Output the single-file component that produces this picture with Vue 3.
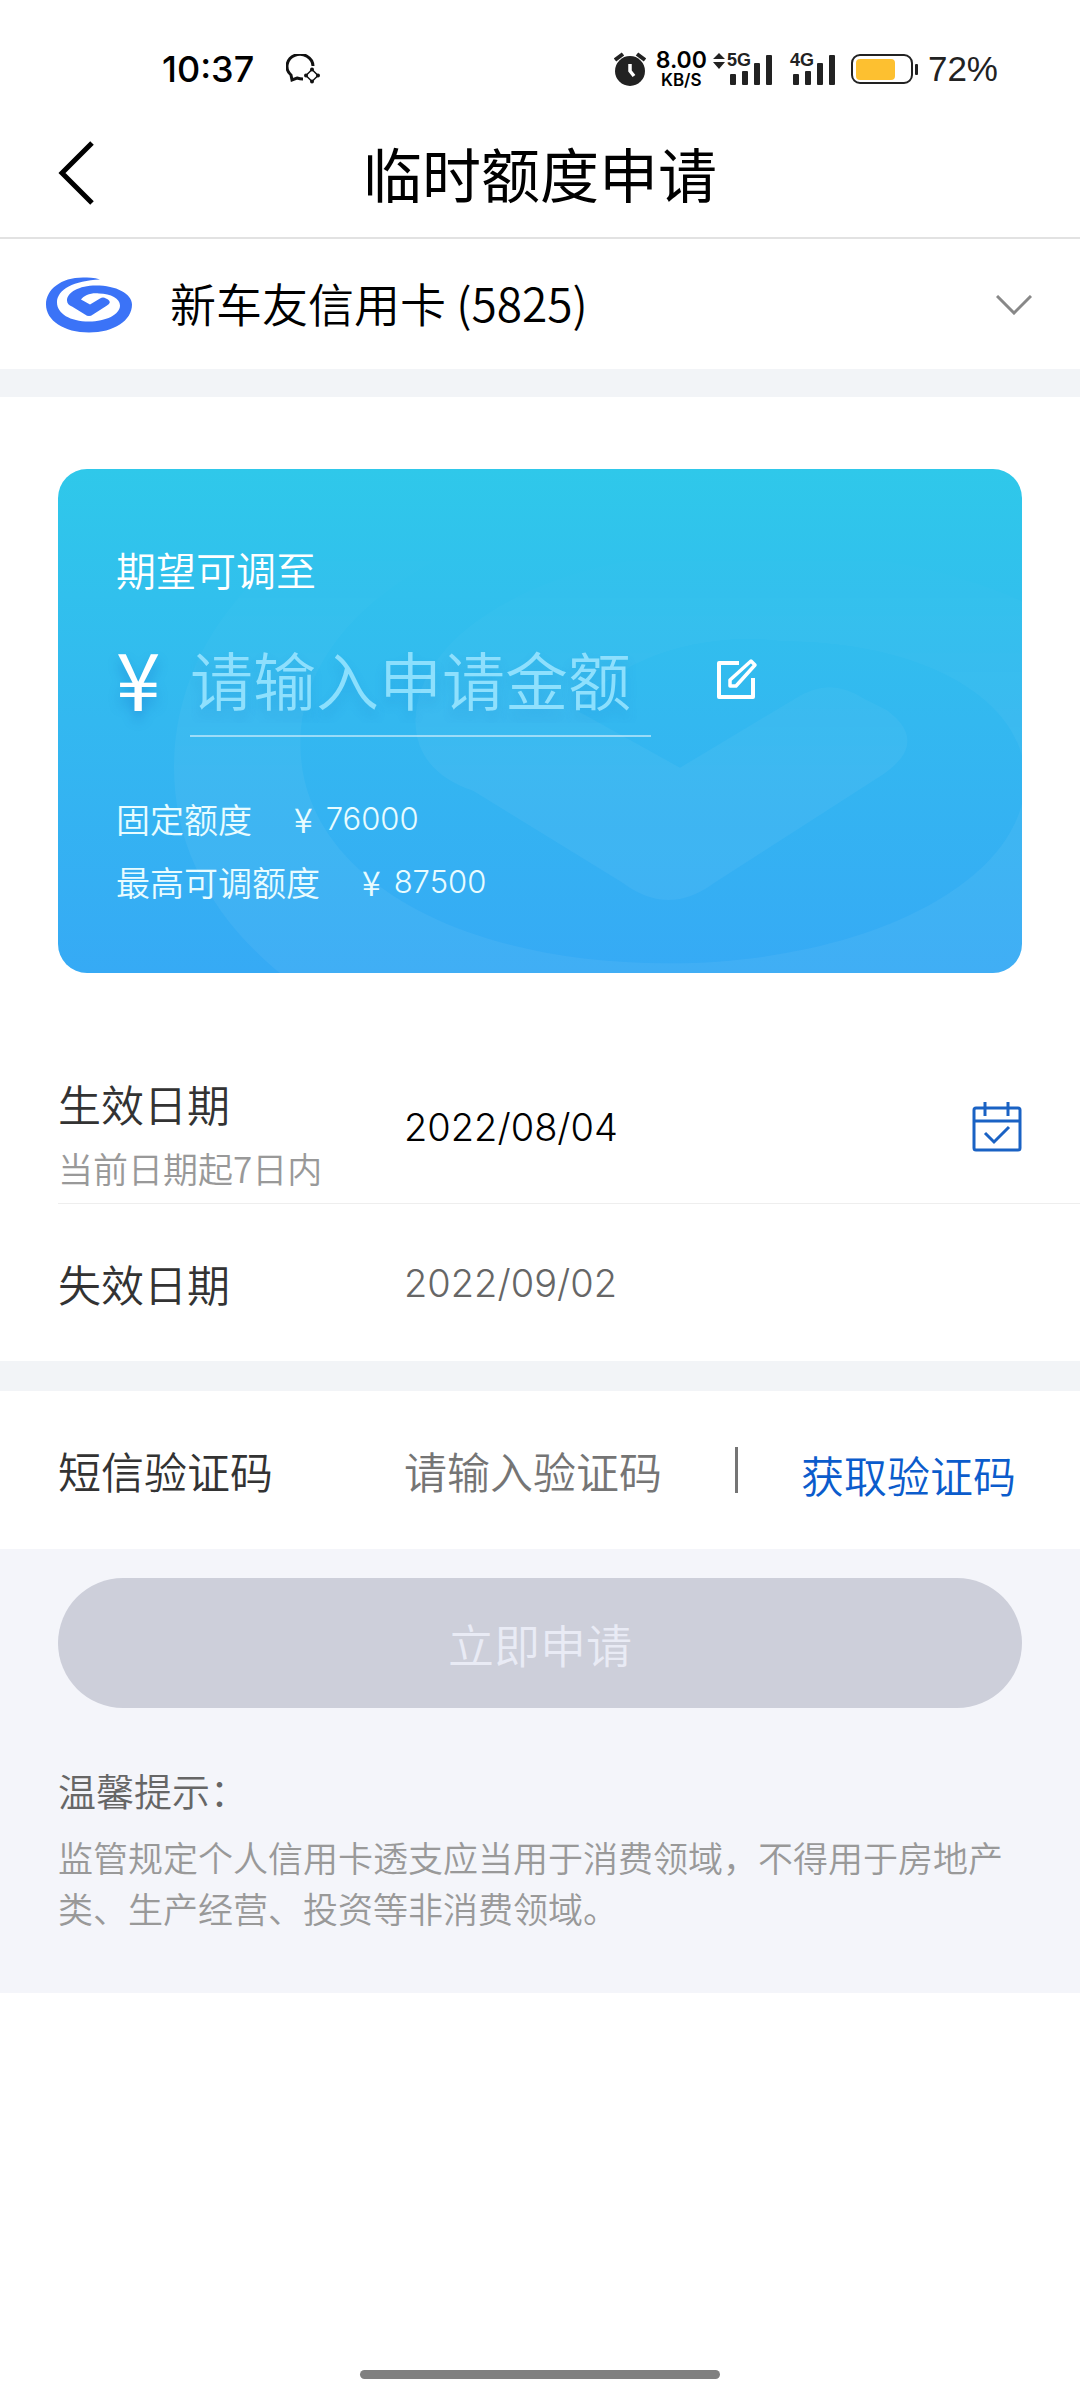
<script setup>
import { ref } from 'vue'

const card = ref('5825')
const amount = ref('')
const code = ref('')
const startDate = ref('2022/08/04')
const endDate = ref('2022/09/02')

const limits = [
  { label: '固定额度', value: '76000' },
  { label: '最高可调额度', value: '87500' },
]

const swirl =
  'M54 2C48 0 42 0 37 0C15 0 0 12 0 27C0 43 18 55 43 55C68 55 86 43 86 27C86 16 70 8 50 8C33 8 21 15 21 23C21 26 23 28 26 29L39 37Q43 40 47 37L61 28Q66 25 62 22L60 21Q57 19 54 21L44 27L35 22C38 18 45 15 53 16C65 16 74 21 74 28C74 37 60 44 43 44C24 44 11 36 11 25C11 12 28 3 54 2Z'
</script>

<template>
  <div class="page">
    <div class="status">
      <div class="status-side">
        <span class="clock">10:37</span>
        <svg class="chat" width="34" height="30" viewBox="0 0 34 30" fill="none" stroke="#111" stroke-width="3">
          <path d="M27 12A13 12 0 1 0 5 21L6 26L11 24Q14 25 17 25" />
          <path d="M26 15.500L32 21.500L26 27.500L20 21.500Z" stroke-width="1.500" />
          <g fill="#111" stroke="none">
            <circle cx="26" cy="15.500" r="2" /><circle cx="32" cy="21.500" r="2" />
            <circle cx="26" cy="27.500" r="2" /><circle cx="20" cy="21.500" r="2" />
          </g>
        </svg>
      </div>
      <div class="status-side">
        <svg width="32" height="36" viewBox="0 0 32 36" fill="none">
          <circle cx="16" cy="20" r="15" fill="#222" />
          <path d="M1 9L9 3M31 9L23 3" stroke="#222" stroke-width="4" />
          <path d="M16 13V20L20 25" stroke="#fff" stroke-width="3.500" />
        </svg>
        <span class="speed"><b>8.00</b><small>KB/S</small></span>
        <svg class="arrows" width="12" height="36" viewBox="0 0 12 36" fill="#222">
          <path d="M6 2L12 8H0ZM6 18L12 11H0Z" />
        </svg>
        <span class="signal">
          <em>5G</em>
          <svg width="44" height="36" viewBox="0 0 44 36" fill="#222">
            <rect x="1" y="23" width="6" height="11" rx="1" /><rect x="13" y="20" width="6" height="14" rx="1" />
            <rect x="25" y="12" width="6" height="22" rx="1" /><rect x="37" y="4" width="6" height="30" rx="1" />
          </svg>
        </span>
        <span class="signal second">
          <em>4G</em>
          <svg width="44" height="36" viewBox="0 0 44 36" fill="#222">
            <rect x="1" y="23" width="6" height="11" rx="1" /><rect x="13" y="20" width="6" height="14" rx="1" />
            <rect x="25" y="12" width="6" height="22" rx="1" /><rect x="37" y="4" width="6" height="30" rx="1" />
          </svg>
        </span>
        <svg class="battery" width="68" height="32" viewBox="0 0 68 32">
          <rect x="2" y="2" width="60" height="28" rx="8" fill="none" stroke="#222" stroke-width="2" />
          <rect x="6" y="6" width="39" height="21" rx="4" fill="#fdc030" />
          <rect x="65" y="11" width="3" height="11" rx="1" fill="#222" />
        </svg>
        <span class="percent">72%</span>
      </div>
    </div>

    <header class="header">
      <button class="back" aria-label="返回">
        <svg width="36" height="64" viewBox="0 0 36 64" fill="none" stroke="#000" stroke-width="5">
          <path d="M34 2L4 32L34 62" />
        </svg>
      </button>
      <h1>临时额度申请</h1>
    </header>

    <section class="card-row">
      <svg width="86" height="56" viewBox="0 0 86 55" fill="#3b73f7"><path :d="swirl" /></svg>
      <select v-model="card" class="card-select" aria-label="信用卡">
        <option value="5825">新车友信用卡 (5825)</option>
      </select>
      <svg class="chevron" width="36" height="20" viewBox="0 0 36 20" fill="none" stroke="#888" stroke-width="3">
        <path d="M1 1L18 18L35 1" />
      </svg>
    </section>
    <div class="band"></div>

    <section class="quota">
      <svg class="mark" width="989" height="633" viewBox="0 0 86 55" fill="#fff" fill-opacity="0.05"><path :d="swirl" /></svg>
      <label class="quota-title" for="amount">期望可调至</label>
      <div class="amount-row">
        <span class="yen">¥</span>
        <input id="amount" v-model="amount" class="amount" placeholder="请输入申请金额" />
        <button class="edit" aria-label="编辑">
          <svg width="42" height="42" viewBox="0 0 42 42" fill="none" stroke="#fff" stroke-width="4" stroke-linejoin="round">
            <path d="M23 5H3V39H37V20" />
            <path d="M35 3L39 7L20 28H14V22Z" stroke-width="3.500" />
          </svg>
        </button>
      </div>
      <div v-for="item in limits" :key="item.label" class="limit">
        <span>{{ item.label }}</span>
        <span class="limit-yen">¥</span>
        <span class="digits">{{ item.value }}</span>
      </div>
    </section>

    <section class="form">
      <div class="row first">
        <div class="name">
          <label for="start">生效日期</label>
          <small>当前日期起7日内</small>
        </div>
        <input id="start" v-model="startDate" class="date" readonly />
        <button class="calendar" aria-label="选择日期">
          <svg width="50" height="50" viewBox="0 0 50 50" fill="none" stroke="#1a62c4" stroke-width="3">
            <rect x="2" y="6" width="46" height="42" rx="2" />
            <path d="M2 19H48M13 0V14M36 0V14M13 31L22 40L37 25" />
          </svg>
        </button>
      </div>
      <div class="row">
        <div class="name"><label for="end">失效日期</label></div>
        <input id="end" v-model="endDate" class="date muted" readonly />
      </div>
    </section>
    <div class="band thick"></div>

    <section class="row sms">
      <div class="name"><label for="code">短信验证码</label></div>
      <input id="code" v-model="code" class="code" placeholder="请输入验证码" />
      <span class="bar"></span>
      <button class="send">获取验证码</button>
    </section>

    <section class="foot">
      <button class="submit" disabled>立即申请</button>
      <h2>温馨提示：</h2>
      <p>监管规定个人信用卡透支应当用于消费领域，不得用于房地产类、生产经营、投资等非消费领域。</p>
    </section>

    <div class="home"></div>
  </div>
</template>

<style>
body {
  background: #fff;
}
</style>

<style scoped>
.page {
  display: flex;
  flex-direction: column;
  min-height: 100vh;
  background: #fff;
  color: #000;
  font-family: "Noto Sans CJK SC", "Noto Sans", sans-serif;
  font-weight: 350;
}
.page * {
  box-sizing: border-box;
}
button,
input,
select {
  padding: 0;
  border: 0;
  background: none;
  color: inherit;
  font-family: inherit;
  font-weight: inherit;
  outline: none;
}
svg {
  display: block;
  flex: none;
}

.status {
  display: flex;
  justify-content: space-between;
  align-items: center;
  height: 106px;
  padding: 32px 82px 0 162px;
  font-family: Inter, sans-serif;
}
.status-side {
  display: flex;
  align-items: center;
  height: 36px;
}
.clock {
  font-size: 36px;
  font-weight: 450;
}
.chat {
  margin-left: 32px;
}
.speed {
  display: flex;
  flex-direction: column;
  align-items: center;
  margin-left: 10px;
  font-weight: 500;
}
.speed b {
  font-size: 23px;
  line-height: 23px;
  font-weight: 600;
}
.speed small {
  font-size: 17px;
  line-height: 17px;
  font-weight: 600;
}
.arrows {
  margin: 0 4px 0 6px;
}
.signal {
  position: relative;
}
.signal em {
  position: absolute;
  top: 0;
  left: -2px;
  color: #222;
  font: 700 18px/18px "Liberation Sans", sans-serif;
}
.signal.second {
  margin-left: 19px;
}
.battery {
  margin: 0 10px 0 14px;
}
.percent {
  color: #222;
  font: 400 35px/36px "Liberation Sans", sans-serif;
}

.header {
  display: grid;
  grid-template-columns: 118px 1fr 118px;
  align-items: center;
  height: 133px;
  padding-top: 2px;
  border-bottom: 2px solid #e2e2e2;
}
.back {
  margin-left: 58px;
  width: 36px;
}
h1 {
  margin: 0;
  font-size: 59px;
  line-height: 80px;
  font-weight: 400;
  text-align: center;
}

.card-row {
  display: flex;
  align-items: center;
  height: 130px;
  padding: 2px 48px 0 46px;
}
.card-select {
  flex: 1;
  margin-left: 38px;
  padding-bottom: 6px;
  appearance: none;
  font-size: 46px;
  line-height: 64px;
}
.band {
  height: 28px;
  background: #f2f4f7;
}
.thick {
  height: 30px;
}

.quota {
  position: relative;
  overflow: hidden;
  margin: 72px 58px 0;
  padding: 70px 58px 58px;
  border-radius: 29px;
  background: linear-gradient(#2fc8ea, #33b8f0 50%, #36aaf5);
  color: #fff;
}
.mark {
  position: absolute;
  top: -12px;
  left: 116px;
  mask-image: linear-gradient(transparent 12%, #000 50%);
}
.quota-title {
  display: block;
  font-size: 40px;
  line-height: 60px;
}
.amount-row {
  display: flex;
  align-items: center;
  height: 117px;
  margin: 21px 0 50px;
}
.yen {
  width: 74px;
  padding-bottom: 6px;
  font-size: 80px;
  line-height: 100px;
  font-weight: 400;
  text-shadow: 0 8px 12px rgba(20, 110, 200, 0.4);
}
.amount {
  flex: 0 1 461px;
  min-width: 0;
  height: 117px;
  border-bottom: 2px solid rgba(255, 255, 255, 0.5);
  font-size: 63px;
  text-shadow: 0 8px 12px rgba(20, 110, 200, 0.2);
}
.amount::placeholder {
  color: #8bdffd;
  opacity: 1;
}
.edit {
  margin-left: 65px;
}
.limit {
  display: flex;
  align-items: center;
  height: 63px;
  color: #e8fcff;
  font-size: 34px;
  line-height: 63px;
}
.limit:last-child {
  margin-bottom: 2px;
}
.limit-yen {
  margin: 0 13px 0 42px;
}
.digits {
  font-family: Inter, sans-serif;
  font-size: 31px;
}

.form {
  padding: 80px 0 0 58px;
}
.row {
  display: flex;
  align-items: center;
  height: 157px;
}
.first {
  height: 151px;
  padding: 0 58px 3px 0;
  border-bottom: 1px solid #eee;
}
.name {
  display: flex;
  flex-direction: column;
  flex: 0 0 346px;
  color: #333;
  font-size: 43px;
  line-height: 60px;
}
.first .name {
  gap: 5px;
  padding-top: 18px;
}
.name small {
  color: #999;
  font-size: 35px;
}
.date {
  flex: 1;
  min-width: 0;
  font-family: Inter, sans-serif;
  font-size: 38px;
}
.muted {
  color: #666;
}
.sms {
  height: 158px;
  padding: 0 64px 0 58px;
}
.code {
  flex: 1;
  min-width: 0;
  font-size: 43px;
}
.code::placeholder {
  color: #757575;
  opacity: 1;
}
.bar {
  width: 3px;
  height: 46px;
  margin-right: 63px;
  background: #757575;
}
.send {
  padding-top: 8px;
  color: #0b5ccc;
  font-size: 43px;
  line-height: 60px;
}

.foot {
  padding: 29px 58px 60px;
  background: #f4f5fa;
}
.submit {
  width: 100%;
  height: 130px;
  border-radius: 65px;
  background: #cdcfda;
  color: #e9ebf5;
  font-size: 46px;
}
h2 {
  margin: 52px 0 11px;
  color: #666;
  font-size: 38px;
  line-height: 60px;
  font-weight: 350;
}
p {
  margin: 0;
  color: #999;
  font-size: 35px;
  line-height: 51px;
}

.home {
  width: 360px;
  height: 9px;
  margin: auto auto 21px;
  border-radius: 5px;
  background: #808080;
}
</style>
